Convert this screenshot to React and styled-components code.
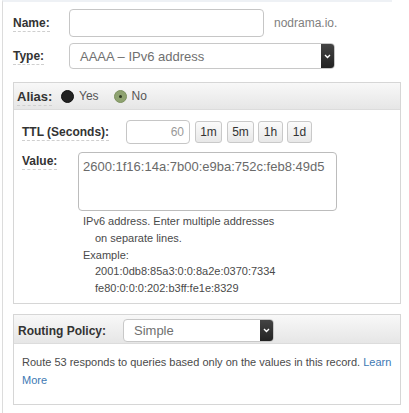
import styled, { createGlobalStyle } from 'styled-components'

const GlobalStyle = createGlobalStyle`
  body {
    margin: 0;
    background: #fff;
    font-family: "Liberation Sans", Arial, sans-serif;
    color: #333;
  }
`

const Page = styled.div`
  margin-left: 2px;
  border-left: 1px solid #dcdcdc;
  border-top: 2px solid #eef1f5;
  padding: 7px 0 10px 10px;
  width: 390px;
  min-height: 413px;
  box-sizing: border-box;
`

const Row = styled.div`
  display: flex;
  align-items: center;
  margin-top: ${(p) => p.$top || 0}px;
`

const Label = styled.div`
  width: ${(p) => p.$width}px;
  flex-shrink: 0;
  font-size: ${(p) => p.$size || 12}px;
  font-weight: 700;
  color: #333;
  align-self: ${(p) => (p.$alignTop ? 'flex-start' : 'auto')};
  padding-top: ${(p) => (p.$alignTop ? 2 : 0)}px;
`

const Dashed = styled.span`
  border-bottom: ${(p) => (p.$plain ? 'none' : '1px dashed #cfcfcf')};
  padding-bottom: 1px;
`

const TextInput = styled.div`
  width: ${(p) => p.$width}px;
  height: ${(p) => p.$height}px;
  box-sizing: border-box;
  border: 1px solid #c6c6c6;
  border-radius: 4px;
  background: #fff;
  font-size: 12px;
  color: #999;
  display: flex;
  align-items: center;
  justify-content: flex-end;
  padding-right: 5px;
`

const Suffix = styled.span`
  margin-left: 10px;
  font-size: 12px;
  color: #808080;
`

const SelectBox = styled.div`
  width: ${(p) => p.$width}px;
  height: ${(p) => p.$height}px;
  box-sizing: border-box;
  border: 1px solid #c8c8c8;
  border-radius: 4px;
  background: #fff;
  display: flex;
  align-items: center;
  overflow: hidden;
`

const SelectText = styled.span`
  flex: 1;
  padding-left: 10px;
  font-size: 13px;
  color: #707070;
`

const SelectArrow = styled.span`
  width: 13px;
  height: 100%;
  background: linear-gradient(#444, #222);
  display: flex;
  align-items: center;
  justify-content: center;
`

const Panel = styled.div`
  width: 388px;
  box-sizing: border-box;
  border: 1px solid #d6d6d6;
  margin-top: ${(p) => p.$top}px;
`

const PanelHeader = styled.div`
  height: ${(p) => p.$height}px;
  box-sizing: border-box;
  border-bottom: 1px solid #dcdcdc;
  background: linear-gradient(#f8f8f8, #e6e6e6);
  display: flex;
  align-items: center;
  padding: ${(p) => p.$pad};
`

const RadioDot = styled.span`
  width: 13px;
  height: 13px;
  border-radius: 50%;
  box-sizing: border-box;
  background: ${(p) => (p.$checked ? '#8fa371' : '#222')};
  border: 1px solid ${(p) => (p.$checked ? '#7d925f' : '#111')};
  display: flex;
  align-items: center;
  justify-content: center;
  margin-left: ${(p) => p.$gap}px;

  &::after {
    content: '';
    width: 3px;
    height: 3px;
    border-radius: 50%;
    background: ${(p) => (p.$checked ? '#2d3a22' : 'transparent')};
  }
`

const RadioText = styled.span`
  margin-left: 5px;
  font-size: 12px;
  color: #555;
`

const PanelBody = styled.div`
  padding: ${(p) => p.$pad};
`

const TimeButton = styled.div`
  width: ${(p) => p.$width}px;
  height: 22px;
  margin-left: ${(p) => p.$gap}px;
  box-sizing: border-box;
  border: 1px solid #c9c9c9;
  border-radius: 3px;
  background: linear-gradient(#fbfbfb, #e8e8e8);
  font-size: 12px;
  color: #333;
  display: flex;
  align-items: center;
  justify-content: center;
`

const TextArea = styled.div`
  width: 259px;
  height: 59px;
  box-sizing: border-box;
  border: 1px solid #bcbcbc;
  border-radius: 4px;
  padding: 6px 4px;
  font-size: 13px;
  line-height: 16px;
  color: #6a6a6a;
`

const Help = styled.div`
  margin: 2px 0 0 61px;
  font-size: 11px;
  line-height: 16.75px;
  color: #4a4a4a;
`

const HelpLine = styled.div`
  padding-left: ${(p) => (p.$indent ? 12 : 0)}px;
`

const Note = styled.div`
  font-size: 11px;
  line-height: 18px;
  color: #4a4a4a;
`

const Link = styled.a`
  color: #3d79b3;
  text-decoration: none;
`

function Chevron() {
  return (
    <svg width="7" height="5" viewBox="0 0 7 5">
      <path d="M1 1 L3.5 3.5 L6 1" stroke="#fff" strokeWidth="1.4" fill="none" />
    </svg>
  )
}

function Select({ value, width, height }) {
  return (
    <SelectBox $width={width} $height={height}>
      <SelectText>{value}</SelectText>
      <SelectArrow>
        <Chevron />
      </SelectArrow>
    </SelectBox>
  )
}

const times = [
  { label: '1m', width: 27, gap: 5 },
  { label: '5m', width: 27, gap: 5 },
  { label: '1h', width: 25, gap: 4 },
  { label: '1d', width: 25, gap: 4 },
]

export default function App() {
  return (
    <>
      <GlobalStyle />
      <Page>
        <Row>
          <Label $width={56}>
            <Dashed>Name:</Dashed>
          </Label>
          <TextInput $width={195} $height={28} />
          <Suffix>nodrama.io.</Suffix>
        </Row>
        <Row $top={6}>
          <Label $width={56}>
            <Dashed>Type:</Dashed>
          </Label>
          <Select value="AAAA – IPv6 address" width={266} height={26} />
        </Row>

        <Panel $top={13}>
          <PanelHeader $height={27} $pad="0 0 0 3px">
            <Label $width={38} $size={13}>
              <Dashed>Alias:</Dashed>
            </Label>
            <RadioDot $gap={6} />
            <RadioText>Yes</RadioText>
            <RadioDot $checked $gap={15} />
            <RadioText>No</RadioText>
          </PanelHeader>
          <PanelBody $pad="10px 8px 6px">
            <Row>
              <Label $width={104}>
                <Dashed>TTL (Seconds):</Dashed>
              </Label>
              <TextInput $width={64} $height={24}>60</TextInput>
              {times.map((t) => (
                <TimeButton key={t.label} $width={t.width} $gap={t.gap}>
                  {t.label}
                </TimeButton>
              ))}
            </Row>
            <Row $top={8}>
              <Label $width={56} $alignTop>
                <Dashed>Value:</Dashed>
              </Label>
              <TextArea>2600:1f16:14a:7b00:e9ba:752c:feb8:49d5</TextArea>
            </Row>
            <Help>
              <HelpLine>IPv6 address. Enter multiple addresses</HelpLine>
              <HelpLine $indent>on separate lines.</HelpLine>
              <HelpLine>Example:</HelpLine>
              <HelpLine $indent>2001:0db8:85a3:0:0:8a2e:0370:7334</HelpLine>
              <HelpLine $indent>fe80:0:0:0:202:b3ff:fe1e:8329</HelpLine>
            </Help>
          </PanelBody>
        </Panel>

        <Panel $top={10}>
          <PanelHeader $height={29} $pad="4px 0 0 4px">
            <Label $width={105}>
              <Dashed $plain>Routing Policy:</Dashed>
            </Label>
            <Select value="Simple" width={151} height={23} />
          </PanelHeader>
          <PanelBody $pad="9px 6px 15px 8px">
            <Note>
              Route 53 responds to queries based only on the values in this record.{' '}
              <Link href="#">Learn More</Link>
            </Note>
          </PanelBody>
        </Panel>
      </Page>
    </>
  )
}
